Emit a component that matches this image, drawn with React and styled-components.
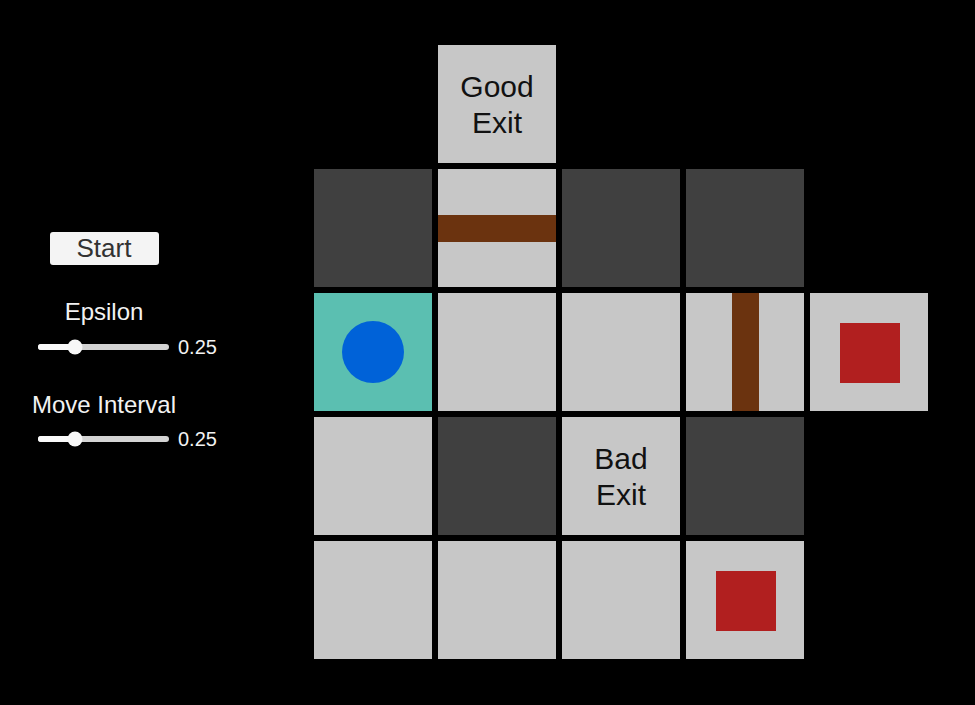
import React from "react";
import styled, { createGlobalStyle } from "styled-components";

const Global = createGlobalStyle`
  html, body { margin: 0; padding: 0; background: #000; }
  body { font-family: "Liberation Sans", Arial, sans-serif; }
`;

const Screen = styled.div`
  width: 975px;
  height: 705px;
  background: #000;
  display: flex;
  flex-direction: row;
  overflow: hidden;
`;

const Panel = styled.div`
  width: 208px;
  flex: none;
  display: flex;
  flex-direction: column;
  align-items: center;
  padding-top: 232px;
  box-sizing: border-box;
`;

const StartButton = styled.button`
  width: 109px;
  height: 33px;
  border: none;
  border-radius: 3px;
  background: #f4f4f4;
  color: #323232;
  font-family: "Liberation Sans", Arial, sans-serif;
  font-size: 26px;
  line-height: 33px;
  padding: 0;
  cursor: pointer;
`;

const Label = styled.div`
  margin-top: ${(p) => p.$gap}px;
  color: #f2f2f2;
  font-size: 24px;
  line-height: 28px;
  white-space: nowrap;
`;

const SliderRow = styled.div`
  align-self: stretch;
  margin-top: ${(p) => p.$gap}px;
  padding-left: 38px;
  display: flex;
  align-items: center;
  gap: 9px;
  height: 20px;
`;

const Track = styled.div`
  position: relative;
  width: 131px;
  height: 6px;
  border-radius: 3px;
  background: #d4d4d4;
  flex: none;
`;

const Fill = styled.div`
  height: 100%;
  border-radius: 3px;
  background: #fafafa;
`;

const Handle = styled.div`
  position: absolute;
  top: 50%;
  width: 15px;
  height: 15px;
  border-radius: 50%;
  background: #f8f8f8;
  transform: translate(-50%, -50%);
`;

const Value = styled.span`
  color: #f2f2f2;
  font-size: 20px;
  line-height: 20px;
  white-space: nowrap;
`;

const Board = styled.div`
  margin-left: 106px;
  margin-top: 45px;
  display: grid;
  grid-template-columns: repeat(5, 118px);
  grid-template-rows: repeat(5, 118px);
  gap: 6px;
  align-content: start;
`;

const cellColors = {
  light: "#c7c7c7",
  dark: "#404040",
  start: "#5bbfb1",
  empty: "transparent",
};

const Cell = styled.div`
  background: ${(p) => cellColors[p.$kind]};
  display: flex;
  align-items: center;
  justify-content: center;
  position: relative;
  overflow: hidden;
`;

const CellText = styled.div`
  color: #111;
  font-size: 30px;
  line-height: 36px;
  padding-top: 2px;
  text-align: center;
`;

const HWall = styled.div`
  width: 100%;
  height: 27px;
  background: #6b330f;
`;

const VWall = styled.div`
  width: 27px;
  height: 100%;
  background: #6b330f;
`;

const Agent = styled.div`
  width: 62px;
  height: 62px;
  border-radius: 50%;
  background: #0062d8;
`;

const Hazard = styled.div`
  width: 60px;
  height: 60px;
  margin-left: 2px;
  margin-top: 1px;
  background: #b11f1f;
`;

const TRACK_W = 131;
const HANDLE_R = 7.5;

function Slider({ value, gap }) {
  const pos = HANDLE_R + value * (TRACK_W - 2 * HANDLE_R);
  return (
    <SliderRow $gap={gap}>
      <Track>
        <Fill style={{ width: pos + "px" }} />
        <Handle style={{ left: pos + "px" }} />
      </Track>
      <Value>{value.toFixed(2)}</Value>
    </SliderRow>
  );
}

const layout = [
  [{ k: "empty" }, { k: "light", t: ["Good", "Exit"] }, { k: "empty" }, { k: "empty" }, { k: "empty" }],
  [{ k: "dark" }, { k: "light", w: "h" }, { k: "dark" }, { k: "dark" }, { k: "empty" }],
  [{ k: "start", a: true }, { k: "light" }, { k: "light" }, { k: "light", w: "v" }, { k: "light", r: true }],
  [{ k: "light" }, { k: "dark" }, { k: "light", t: ["Bad", "Exit"] }, { k: "dark" }, { k: "empty" }],
  [{ k: "light" }, { k: "light" }, { k: "light" }, { k: "light", r: true }, { k: "empty" }],
];

export default function App() {
  return (
    <>
      <Global />
      <Screen>
        <Panel>
          <StartButton>Start</StartButton>
          <Label $gap={33}>Epsilon</Label>
          <Slider value={0.25} gap={11} />
          <Label $gap={34}>Move Interval</Label>
          <Slider value={0.25} gap={10} />
        </Panel>
        <Board>
          {layout.flat().map((c, i) => (
            <Cell key={i} $kind={c.k}>
              {c.t && (
                <CellText>
                  {c.t[0]}
                  <br />
                  {c.t[1]}
                </CellText>
              )}
              {c.w === "h" && <HWall />}
              {c.w === "v" && <VWall />}
              {c.a && <Agent />}
              {c.r && <Hazard />}
            </Cell>
          ))}
        </Board>
      </Screen>
    </>
  );
}
